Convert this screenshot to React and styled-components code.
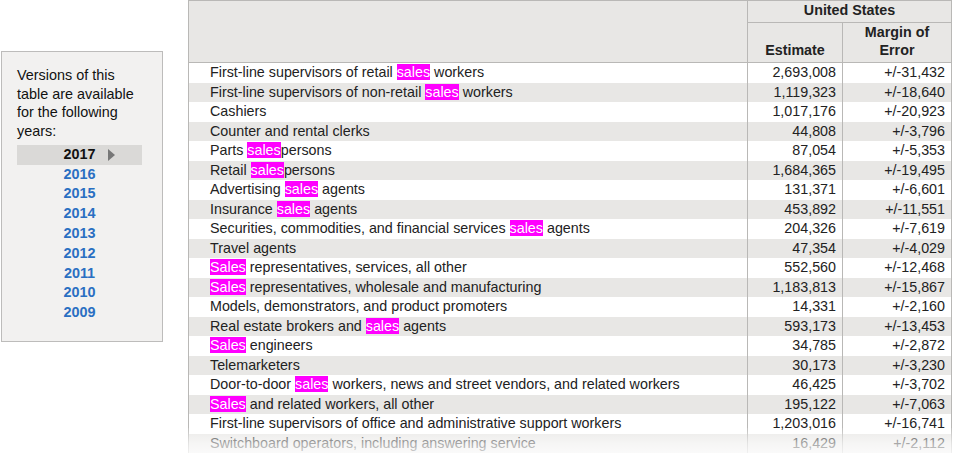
import React from "react";
import styled, { createGlobalStyle } from "styled-components";

const Global = createGlobalStyle`
  html, body { margin: 0; background: #fff; overflow: hidden; }
  body { font-family: "Liberation Sans", Arial, sans-serif; color: #222; }
`;

const Page = styled.div`
  display: flex;
  align-items: flex-start;
  gap: 25px;
  padding-left: 1px;
  height: 466px;
  overflow: hidden;
  position: relative;
`;

const Panel = styled.div`
  margin-top: 51px;
  width: 145px;
  height: 275px;
  padding: 14px 0 0 15px;
  background: #f2f1f0;
  border: 1px solid #bdbcbb;
  font-size: 14.4px;
  line-height: 18.7px;
  color: #111;
`;

const Intro = styled.div`
  width: 126px;
`;

const Years = styled.ul`
  list-style: none;
  margin: 4px 0 0;
  padding: 0;
  width: 125px;
`;

const Year = styled.li`
  position: relative;
  text-align: center;
  font-weight: bold;
  font-size: 14.4px;
  line-height: 19.8px;
  color: ${(p) => (p.$current ? "#111" : "#2a6fc2")};
  background: ${(p) => (p.$current ? "#dad9d7" : "transparent")};
  &::after {
    content: "";
    display: ${(p) => (p.$current ? "block" : "none")};
    position: absolute;
    left: 91px;
    top: 4px;
    border-left: 7px solid #777;
    border-top: 6px solid transparent;
    border-bottom: 6px solid transparent;
  }
`;

const Table = styled.table`
  border-collapse: collapse;
  width: 763px;
  font-size: 14.3px;
  table-layout: fixed;
`;

const Th = styled.th`
  background: #e8e7e5;
  border: 1px solid #b9b8b6;
  font-size: 14.3px;
  font-weight: bold;
  color: #222;
  height: ${(p) => p.$h}px;
  padding: 0 6px 3px;
  box-sizing: border-box;
  vertical-align: ${(p) => (p.$bottom ? "bottom" : "middle")};
  line-height: 18px;
`;

const Tr = styled.tr`
  background: ${(p) => (p.$alt ? "#e8e7e5" : "#fff")};
  height: 19.5px;
`;

const Label = styled.td`
  padding: 0 0 0 21px;
  white-space: nowrap;
  line-height: 19.5px;
  border-left: 1px solid #b9b8b6;
`;

const Num = styled.td`
  text-align: right;
  padding: 0 6px 0 0;
  line-height: 19.5px;
  border-left: 1px solid #b9b8b6;
  border-right: ${(p) => (p.$last ? "1px solid #b9b8b6" : "none")};
`;

const Hl = styled.span`
  background: #f0f;
  color: #fff;
`;

const Fade = styled.div`
  position: absolute;
  left: 180px;
  right: 0;
  top: 428px;
  bottom: 0;
  background: linear-gradient(rgba(255,255,255,0.1), rgba(255,255,255,0.6) 40%, #fff 95%);
`;

const H = (s) => {
  const parts = s.split(/(sales|Sales)/);
  return parts.map((p, i) => (p === "sales" || p === "Sales" ? <Hl key={i}>{p}</Hl> : p));
};

const rows = [
  ["First-line supervisors of retail sales workers", "2,693,008", "+/-31,432"],
  ["First-line supervisors of non-retail sales workers", "1,119,323", "+/-18,640"],
  ["Cashiers", "1,017,176", "+/-20,923"],
  ["Counter and rental clerks", "44,808", "+/-3,796"],
  ["Parts salespersons", "87,054", "+/-5,353"],
  ["Retail salespersons", "1,684,365", "+/-19,495"],
  ["Advertising sales agents", "131,371", "+/-6,601"],
  ["Insurance sales agents", "453,892", "+/-11,551"],
  ["Securities, commodities, and financial services sales agents", "204,326", "+/-7,619"],
  ["Travel agents", "47,354", "+/-4,029"],
  ["Sales representatives, services, all other", "552,560", "+/-12,468"],
  ["Sales representatives, wholesale and manufacturing", "1,183,813", "+/-15,867"],
  ["Models, demonstrators, and product promoters", "14,331", "+/-2,160"],
  ["Real estate brokers and sales agents", "593,173", "+/-13,453"],
  ["Sales engineers", "34,785", "+/-2,872"],
  ["Telemarketers", "30,173", "+/-3,230"],
  ["Door-to-door sales workers, news and street vendors, and related workers", "46,425", "+/-3,702"],
  ["Sales and related workers, all other", "195,122", "+/-7,063"],
  ["First-line supervisors of office and administrative support workers", "1,203,016", "+/-16,741"],
  ["Switchboard operators, including answering service", "16,429", "+/-2,112"],
];

const years = ["2017", "2016", "2015", "2014", "2013", "2012", "2011", "2010", "2009"];

export default function App() {
  return (
    <Page>
      <Global />
      <Panel>
        <Intro>Versions of this table are available for the following years:</Intro>
        <Years>
          {years.map((y, i) => (
            <Year key={y} $current={i === 0}>{y}</Year>
          ))}
        </Years>
      </Panel>
      <Table>
        <colgroup>
          <col style={{ width: 559 }} />
          <col style={{ width: 95 }} />
          <col style={{ width: 109 }} />
        </colgroup>
        <thead>
          <tr>
            <Th rowSpan={2} />
            <Th colSpan={2} $h={22}>United States</Th>
          </tr>
          <tr>
            <Th $h={40} $bottom>Estimate</Th>
            <Th $h={40} $bottom>Margin of<br />Error</Th>
          </tr>
        </thead>
        <tbody>
          {rows.map((r, i) => (
            <Tr key={i} $alt={i % 2 === 1}>
              <Label>{H(r[0])}</Label>
              <Num>{r[1]}</Num>
              <Num $last>{r[2]}</Num>
            </Tr>
          ))}
        </tbody>
      </Table>
      <Fade />
    </Page>
  );
}
